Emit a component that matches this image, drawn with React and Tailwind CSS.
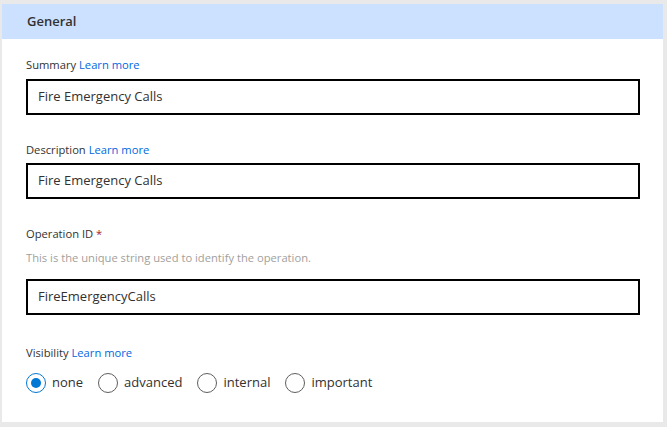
import React from 'react';

const font = { fontFamily: '"Segoe UI", "Open Sans", "Noto Sans", sans-serif' };

const Label = ({ text, link, required }) => (
  <div className="text-[11.2px] leading-[16px] text-[#323130]">
    {text}
    {link && <span className="text-[#0067e0]"> Learn more</span>}
    {required && <span className="text-[#a4262c]"> *</span>}
  </div>
);

const Input = ({ value }) => (
  <div className="h-[36px] border-2 border-black bg-white flex items-center pl-[10px] text-[13px] text-[#323130]">
    {value}
  </div>
);

const Radio = ({ label, checked }) => (
  <div className="flex items-center gap-[6px]">
    <div
      className={
        checked
          ? 'w-[20px] h-[20px] rounded-full border border-[#0078d4] flex items-center justify-center'
          : 'w-[20px] h-[20px] rounded-full border border-[#605e5c]'
      }
    >
      {checked && <div className="w-[10px] h-[10px] rounded-full bg-[#0078d4]" />}
    </div>
    <span className="text-[13px] text-[#323130]">{label}</span>
  </div>
);

export default function App() {
  return (
    <div className="w-[667px] h-[427px] bg-[#e9e9e9] pt-[4px] pl-[2px] pr-[4px] pb-[5px]" style={font}>
      <div className="h-full bg-white flex flex-col">
        <div className="h-[35px] bg-[#cce1ff] flex items-center pl-[25px] text-[13px] font-semibold text-[#323130]">
          General
        </div>
        <div className="pl-[24px] pr-[23px] pt-[18px] flex flex-col">
          <Label text="Summary" link />
          <div className="mt-[6px]">
            <Input value="Fire Emergency Calls" />
          </div>
          <div className="mt-[27px]">
            <Label text="Description" link />
          </div>
          <div className="mt-[5px]">
            <Input value="Fire Emergency Calls" />
          </div>
          <div className="mt-[27px]">
            <Label text="Operation ID" required />
          </div>
          <div className="mt-[8px] text-[11.2px] leading-[16px] text-[#a19f9d]">
            This is the unique string used to identify the operation.
          </div>
          <div className="mt-[13px]">
            <Input value="FireEmergencyCalls" />
          </div>
          <div className="mt-[30px]">
            <Label text="Visibility" link />
          </div>
          <div className="mt-[12px] flex items-center gap-[15px]">
            <Radio label="none" checked />
            <Radio label="advanced" />
            <Radio label="internal" />
            <Radio label="important" />
          </div>
        </div>
      </div>
    </div>
  );
}
